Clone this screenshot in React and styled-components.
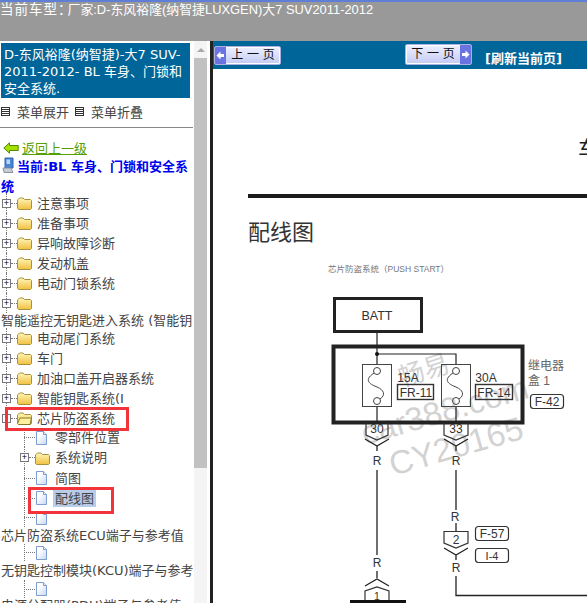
import React from 'react'
import styled, { createGlobalStyle } from 'styled-components'

const FONT = `"DejaVu Sans", "Noto Sans CJK SC", sans-serif`
const SANS = `"Liberation Sans", "Noto Sans CJK SC", sans-serif`

const GlobalStyle = createGlobalStyle`
    html, body { margin: 0; padding: 0; background: #fff; }
`

const treeRows = [
    { kind: 'folder', label: '注意事项' },
    { kind: 'folder', label: '准备事项' },
    { kind: 'folder', label: '异响故障诊断' },
    { kind: 'folder', label: '发动机盖' },
    { kind: 'folder', label: '电动门锁系统' },
    { kind: 'folder', label: '' },
    { kind: 'text', label: '智能遥控无钥匙进入系统 (智能钥', height: 15 },
    { kind: 'folder', label: '电动尾门系统' },
    { kind: 'folder', label: '车门' },
    { kind: 'folder', label: '加油口盖开启器系统' },
    { kind: 'folder', label: '智能钥匙系统(I' },
    { kind: 'folder', label: '芯片防盗系统', open: true },
    { kind: 'doc', label: '零部件位置', height: 19 },
    { kind: 'folder', label: '系统说明', level: 1, height: 21 },
    { kind: 'doc', label: '简图' },
    { kind: 'doc', label: '配线图', selected: true },
    { kind: 'doc', label: '', height: 19 },
    { kind: 'text', label: '芯片防盗系统ECU端子与参考值', height: 17 },
    { kind: 'doc', label: '', height: 17 },
    { kind: 'text', label: '无钥匙控制模块(KCU)端子与参考', height: 19 },
    { kind: 'doc', label: '', height: 18 },
    { kind: 'text', label: '电源分配器(PDU)端子与参考值', height: 16 },
]

const FolderIcon = ({ open }) => (
    <svg width="15" height="14" viewBox="0 0 15 14">
        <defs>
            <linearGradient id="folderFill" x1="0" y1="0" x2="0" y2="1">
                <stop offset="0" stopColor="#fff6b8" />
                <stop offset="1" stopColor="#f0c040" />
            </linearGradient>
        </defs>
        <path d="M1 3.5 L2.5 2 H6 L7.5 3.5 H13.5 L14.5 4.5 V12.5 L13.5 13.5 H1.5 L.5 12.5 V4 Z" fill="url(#folderFill)" stroke="#a8923e" />
        {open && <path d="M.5 12.5 L3 7 H14.5 L13 13.5 H1.5 Z" fill="#fff0a0" stroke="#8a7a30" />}
    </svg>
)

const DocIcon = () => (
    <svg width="13" height="14" viewBox="0 0 13 14">
        <defs>
            <linearGradient id="docFill" x1="0" y1="0" x2="1" y2="1">
                <stop offset="0.3" stopColor="#ffffff" />
                <stop offset="1" stopColor="#c4d8f2" />
            </linearGradient>
        </defs>
        <path d="M1.5 .5 H8.5 L11.5 3.5 V13.5 H1.5 Z" fill="url(#docFill)" stroke="#7f9dd0" />
        <path d="M8.5 .5 V3.5 H11.5" fill="#dfe9f8" stroke="#7f9dd0" />
    </svg>
)

const BackArrow = () => (
    <svg width="16" height="12" viewBox="0 0 16 12">
        <path d="M.8 6 L6.5 .8 V3.5 H15.2 V8.5 H6.5 V11.2 Z" fill="#a6e000" stroke="#4f8a00" />
    </svg>
)

const PcIcon = () => (
    <svg width="12" height="17" viewBox="0 0 12 17">
        <path d="M3 1 H11 V11 H3 Z" fill="#4a86d8" stroke="#2f62ae" />
        <path d="M4.5 2.5 H8 V7 H4.5 Z" fill="#b8d6f6" />
        <path d="M1 11 H9 L11 15.5 H2 Z" fill="#c8ccd4" stroke="#8c93a0" />
    </svg>
)

const PagerArrow = ({ next }) => (
    <ArrowBlock>
        <svg width="9" height="9" viewBox="0 0 9 9">
            <path d={next ? 'M1 3 H4.5 V.5 L8.5 4.5 L4.5 8.5 V6 H1 Z' : 'M8 3 H4.5 V.5 L.5 4.5 L4.5 8.5 V6 H8 Z'} fill="#fff" />
        </svg>
    </ArrowBlock>
)

const PagerButton = ({ direction, label }) => (
    <Pager $next={direction === 'next'}>
        {direction === 'prev' && <PagerArrow />}
        <PagerLabel>{label}</PagerLabel>
        {direction === 'next' && <PagerArrow next />}
    </Pager>
)

const TreeRow = ({ row }) => {
    const { kind, label, level = 0, open, selected, height = 20 } = row
    if (kind === 'text') {
        return <WrapLabel $height={height}>{label}</WrapLabel>
    }
    return (
        <Row $height={height} $level={kind === 'doc' ? 1 : level}>
            {kind === 'folder' ? <Expander>{open ? '' : '+'}</Expander> : <Connector />}
            {kind === 'folder' && <ShortDots />}
            <IconSlot>{kind === 'folder' ? <FolderIcon open={open} /> : <DocIcon />}</IconSlot>
            <Label $selected={selected}>{label}</Label>
        </Row>
    )
}

const Diagram = () => (
    <Sheet viewBox="213 69 374 534">
        <text x="578" y="157" fontSize="22" fill="#222">车</text>
        <rect x="248" y="194" width="339" height="4" fill="#1c1c1c" />
        <text x="248" y="240" fontSize="22" fill="#333">配线图</text>
        <text x="328" y="272" fontSize="8.5" fill="#777">芯片防盗系统（PUSH START）</text>

        <g fill="#c4c4c4" fillOpacity=".75" fontFamily={SANS}>
            <text x="402" y="387" fontSize="26" transform="rotate(-18 402 387)">畅易</text>
            <text x="365" y="445" fontSize="33" transform="rotate(-16 365 445)">car388.com</text>
            <text x="393" y="476" fontSize="33" transform="rotate(-16 393 476)">CY20165</text>
        </g>

        <g fill="none" stroke="#222">
            <rect x="334.5" y="298.5" width="87" height="33" strokeWidth="3" />
            <rect x="333.5" y="346.5" width="189" height="76" strokeWidth="4" />
            <path d="M377 332 V364 M377 354 H456 V365 M377 407 V423 M456 407 V423" strokeWidth="1.2" />
            <rect x="362.5" y="364.5" width="29" height="42" stroke="#444" />
            <rect x="441.5" y="364.5" width="29" height="42" stroke="#444" />
            <circle cx="377" cy="371" r="3.5" stroke="#444" />
            <circle cx="377" cy="401" r="3.5" stroke="#444" />
            <circle cx="456" cy="371" r="3.5" stroke="#444" />
            <circle cx="456" cy="401" r="3.5" stroke="#444" />
            <path d="M374 373 C362 381 372 385 377 387 C384 390 386 395 380 399" stroke="#444" />
            <path d="M453 373 C441 381 451 385 456 387 C463 390 465 395 459 399" stroke="#444" />
            <rect x="397.5" y="384.5" width="36" height="15" stroke="#333" strokeWidth="1.4" />
            <rect x="475.5" y="384.5" width="37" height="15" stroke="#333" strokeWidth="1.4" />
            <rect x="530.5" y="394.5" width="33" height="14" rx="3" stroke="#333" strokeWidth="1.2" />
            <rect x="475.5" y="526.5" width="33" height="14" rx="3" stroke="#333" strokeWidth="1.2" />
            <rect x="475.5" y="548.5" width="33" height="14" rx="3" stroke="#333" strokeWidth="1.2" />

            <path d="M366 423 V435 L377 440 L388 435 V423" stroke="#333" strokeWidth="1.2" />
            <path d="M365 439 L377 446 L389 439 M377 446 V451 M377 470 V555 M377 571 V578 M365 586 L377 579 L389 586" stroke="#222" strokeWidth="1.3" />
            <path d="M365 601 V591 L377 587 L389 591 V601" stroke="#333" strokeWidth="1.2" />
            <path d="M350 601.5 H406" stroke="#111" strokeWidth="3" />

            <path d="M444 423 V435 L456 440 L468 435 V423" stroke="#333" strokeWidth="1.2" />
            <path d="M444 439 L456 446 L468 439 M456 446 V451 M456 470 V510 M456 523 V531 M456 576 V595.5 H587" stroke="#222" strokeWidth="1.3" />
            <path d="M444 531.5 H468 V543 L456 548 L444 543 Z" stroke="#333" strokeWidth="1.2" />
            <path d="M444 548 L456 555 L468 548 M456 555 V560" stroke="#222" strokeWidth="1.3" />
        </g>
        <circle cx="377" cy="354" r="2" fill="#111" />

        <g fontFamily={SANS} fontSize="12" fill="#333" textAnchor="middle">
            <text x="377" y="320" fontSize="12.5">BATT</text>
            <text x="408" y="382">15A</text>
            <text x="486" y="382">30A</text>
            <text x="416" y="397">FR-11</text>
            <text x="494" y="397">FR-14</text>
            <text x="547" y="406">F-42</text>
            <text x="492" y="538">F-57</text>
            <text x="492" y="560" fontSize="11">I-4</text>
            <text x="377" y="433">30</text>
            <text x="456" y="433">33</text>
            <text x="456" y="544">2</text>
            <text x="377" y="600" fontSize="10.5">1</text>
            <text x="377" y="465">R</text>
            <text x="456" y="465">R</text>
            <text x="455" y="521">R</text>
            <text x="377" y="567">R</text>
            <text x="456" y="572">R</text>
        </g>
        <text x="528" y="370" fontSize="12" fill="#666">继电器</text>
        <text x="528" y="385" fontSize="12" fill="#666">盒 1</text>
    </Sheet>
)

const App = () => (
    <Page>
        <GlobalStyle />
        <Header><HeaderKey>当前车型：</HeaderKey>厂家:D-东风裕隆(纳智捷LUXGEN)大7 SUV2011-2012</Header>
        <Body>
            <Sidebar>
                <TitleBox>D-东风裕隆(纳智捷)-大7 SUV-2011-2012- BL 车身、门锁和安全系统.</TitleBox>
                <MenuBar>
                    <MenuItem><MenuGlyph />菜单展开</MenuItem>
                    <MenuItem><MenuGlyph />菜单折叠</MenuItem>
                </MenuBar>
                <BackRow><BackArrow /><BackLink>返回上一级</BackLink></BackRow>
                <Current><PcIcon />当前:BL 车身、门锁和安全系统</Current>
                <Tree>
                    {treeRows.map((row, i) => <TreeRow key={i} row={row} />)}
                </Tree>
            </Sidebar>
            <Scrollbar>
                <ScrollUp />
                <ScrollThumb />
            </Scrollbar>
            <Splitter />
            <Main>
                <Toolbar>
                    <PagerButton direction="prev" label="上 一 页" />
                    <PagerButton direction="next" label="下 一 页" />
                    <Refresh>[刷新当前页]</Refresh>
                </Toolbar>
                <Diagram />
            </Main>
        </Body>
        <RedBox $x={5} $y={407} $w={124} $h={24} />
        <RedBox $x={28} $y={487} $w={86} $h={27} />
    </Page>
)

const Page = styled.div`
    position: relative;
    width: 587px;
    height: 603px;
    overflow: hidden;
    font-family: ${FONT};
    display: flex;
    flex-direction: column;
`
const Header = styled.div`
    height: 39px;
    flex: none;
    background: #999999;
    border-top: 2px solid #5f7fd6;
    color: #fff;
    font: 12.9px/15px ${SANS};
    white-space: nowrap;
`
const HeaderKey = styled.span`
    letter-spacing: 1px;
    font-size: 13.5px;
    margin-right: -5px;
`
const Body = styled.div`
    flex: 1;
    min-height: 0;
    display: flex;
`
const Sidebar = styled.div`
    width: 193px;
    flex: none;
    padding-top: 2px;
    overflow: hidden;
    box-sizing: border-box;
`
const TitleBox = styled.div`
    margin-left: 1px;
    width: 189px;
    height: 55px;
    box-sizing: border-box;
    padding: 3px 2px 0 3px;
    background: #006699;
    color: #fff;
    font-size: 13px;
    line-height: 17px;
`
const MenuBar = styled.div`
    display: flex;
    gap: 6px;
    align-items: center;
    padding-left: 1px;
    padding-bottom: 2px;
    border-bottom: 1px solid #888;
    margin-bottom: 10px;
    height: 27px;
    font-size: 13px;
    color: #444;
`
const MenuItem = styled.div`
    display: flex;
    align-items: center;
    gap: 7px;
    white-space: nowrap;
`
const MenuGlyph = styled.span`
    width: 7px;
    height: 7px;
    border: 1px solid #333;
    box-sizing: content-box;
    background: repeating-linear-gradient(#fff 0 1px, #333 1px 2px);
`
const BackRow = styled.div`
    display: flex;
    align-items: center;
    gap: 3px;
    height: 19px;
    padding-left: 3px;
    font-size: 13px;
`
const BackLink = styled.a`
    color: #55a000;
    text-decoration: underline;
`
const Current = styled.div`
    font-size: 13px;
    font-weight: bold;
    line-height: 20px;
    color: #0000ee;
    padding-left: 1px;
    height: 36px;
    svg {
        vertical-align: -3px;
        margin-right: 3px;
        margin-left: 1px;
    }
`
const Tree = styled.div`
    font-size: 13px;
    color: #444;
`
const Row = styled.div`
    position: relative;
    height: ${p => p.$height}px;
    display: flex;
    align-items: center;
    padding-left: ${p => 2 + p.$level * 18}px;
    white-space: nowrap;
    &::before {
        content: '';
        position: absolute;
        left: ${p => 6 + p.$level * 18}px;
        top: 0;
        bottom: 0;
        border-left: 1px dotted #777;
    }
`
const Expander = styled.span`
    position: relative;
    width: 7px;
    height: 7px;
    flex: none;
    border: 1px solid #777;
    background: #fff;
    color: #000;
    font: 9px/7px ${SANS};
    text-align: center;
`
const Connector = styled.span`
    width: 15px;
    margin-left: 4px;
    margin-right: -4px;
    flex: none;
    border-top: 1px dotted #777;
`
const ShortDots = styled.span`
    width: 6px;
    flex: none;
    border-top: 1px dotted #777;
`
const IconSlot = styled.span`
    display: flex;
    width: 15px;
    flex: none;
    margin-right: 5px;
`
const Label = styled.span`
    padding: 0 ${p => (p.$selected ? '2px' : '0')};
    margin-left: ${p => (p.$selected ? '-2px' : '0')};
    background: ${p => (p.$selected ? '#b9cde8' : 'transparent')};
    line-height: 17px;
`
const WrapLabel = styled.div`
    height: ${p => p.$height}px;
    line-height: ${p => p.$height}px;
    padding-left: 1px;
    white-space: nowrap;
`
const Scrollbar = styled.div`
    width: 13px;
    margin-left: 1px;
    flex: none;
    display: flex;
    flex-direction: column;
    background: #f4f4f4;
`
const ScrollUp = styled.div`
    height: 17px;
    flex: none;
    position: relative;
    &::after {
        content: '';
        position: absolute;
        left: 3px;
        top: 7px;
        border: 4px solid transparent;
        border-top: 0;
        border-bottom: 4px solid #a8a8a8;
    }
`
const ScrollThumb = styled.div`
    height: 410px;
    flex: none;
    background: #c1c1c1;
`
const Splitter = styled.div`
    width: 3px;
    margin-left: 3px;
    flex: none;
    background: #222;
`
const Main = styled.div`
    flex: 1;
    min-width: 0;
    background: #fff;
`
const Toolbar = styled.div`
    height: 28px;
    background: #006699;
    display: flex;
    align-items: flex-start;
    padding-left: 1px;
`
const Pager = styled.div`
    width: 67px;
    height: ${p => (p.$next ? '21px' : '19px')};
    margin-top: ${p => (p.$next ? '3px' : '5px')};
    margin-left: ${p => (p.$next ? '124px' : '0')};
    flex: none;
    box-sizing: border-box;
    display: flex;
    align-items: center;
    border: 1px solid #aab0e0;
    box-shadow: inset 0 0 0 1px #fff;
    border-radius: 2px;
    background: linear-gradient(#eef0ff, #c4cbf4);
    overflow: hidden;
`
const ArrowBlock = styled.span`
    width: 11px;
    height: 100%;
    flex: none;
    background: #6a74e0;
    display: flex;
    align-items: center;
    justify-content: center;
`
const PagerLabel = styled.span`
    flex: 1;
    text-align: center;
    font-size: 12px;
    line-height: 15px;
    color: #111;
    white-space: nowrap;
`
const Refresh = styled.a`
    margin: 10px 0 0 13px;
    color: #fff;
    font-size: 13px;
    line-height: 15px;
    font-weight: bold;
    white-space: nowrap;
`
const Sheet = styled.svg`
    display: block;
    width: 374px;
    height: 534px;
    font-family: ${SANS};
`
const RedBox = styled.div`
    position: absolute;
    left: ${p => p.$x}px;
    top: ${p => p.$y}px;
    width: ${p => p.$w}px;
    height: ${p => p.$h}px;
    box-sizing: border-box;
    border: 3px solid #f2333a;
`

export default App
